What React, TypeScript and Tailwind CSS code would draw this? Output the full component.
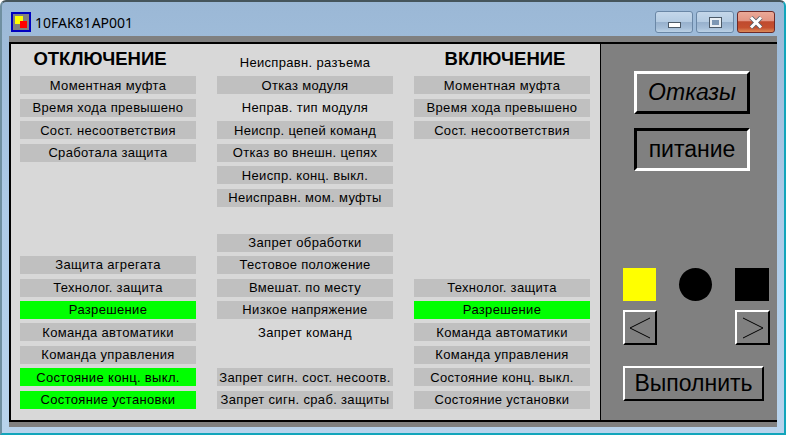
const off = ["Моментная муфта", "Время хода превышено", "Сост. несоответствия", "Сработала защита", "", "", "", "", "Защита агрегата", "Технолог. защита", "Разрешение", "Команда автоматики", "Команда управления", "Состояние конц. выкл.", "Состояние установки"];
const mid = ["Неисправн. разъема", "Отказ модуля", "Неправ. тип модуля", "Неиспр. цепей команд", "Отказ во внешн. цепях", "Неиспр. конц. выкл.", "Неисправн. мом. муфты", "", "Запрет обработки", "Тестовое положение", "Вмешат. по месту", "Низкое напряжение", "Запрет команд", "", "Запрет сигн. сост. несоотв.", "Запрет сигн. сраб. защиты"];
const on = ["Моментная муфта", "Время хода превышено", "Сост. несоответствия", "", "", "", "", "", "", "Технолог. защита", "Разрешение", "Команда автоматики", "Команда управления", "Состояние конц. выкл.", "Состояние установки"];

// rows in the middle column that sit on the panel colour, no grey plate
const plainMid = ["Неисправн. разъема", "Неправ. тип модуля", "Запрет команд"];
const greenOff = ["Разрешение", "Состояние конц. выкл.", "Состояние установки"];
const greenOn = ["Разрешение"];

function Cell({ text, green, plain }: { text: string; green?: boolean; plain?: boolean }) {
  if (!text) return <div className="h-[18px]" />;
  const bg = green ? "bg-[#00ff00]" : plain ? "" : "bg-[#c0c0c0]";
  return (
    <div className={`flex h-[18px] items-center justify-center whitespace-nowrap text-[13px] tracking-[0.33px] text-black ${bg}`}>
      {text}
    </div>
  );
}

function Column({ heading, headingClass, rows, green = [], plain = [] }: { heading?: string; headingClass?: string; rows: string[]; green?: string[]; plain?: string[] }) {
  return (
    <div className="flex w-[176px] flex-col gap-y-[4.467px]">
      {heading && (
        <div className={`flex h-[18px] items-start justify-center text-[18.5px] font-bold leading-[10px] text-black ${headingClass}`}>{heading}</div>
      )}
      {rows.map((t, i) => (
        <Cell key={i} text={t} green={green.includes(t)} plain={plain.includes(t)} />
      ))}
    </div>
  );
}

export default function App() {
  return (
    <div className="flex h-[435px] w-[786px] flex-col overflow-hidden rounded-t-[6px] border-2 border-b-[#12a5bb] border-l-[#6f8fa0] border-r-[#12a5bb] border-t-[#45555c] bg-gradient-to-b from-[#9bb8d6] via-[#aecbe8] to-[#b8d3ec] font-['Liberation_Sans',Arial,sans-serif]">
      {/* title bar */}
      <div className="flex h-[34px] shrink-0 items-start pl-[9px] pr-[9px]">
        <div className="mt-[10px] flex h-[20px] w-[20px] items-center justify-center border-2 border-[#0000c0] bg-[#808080]">
          <svg width="14" height="14" viewBox="0 0 14 14">
            <rect x="1" y="1" width="8" height="8" fill="#ffff00" />
            <rect x="6" y="6" width="7" height="7" fill="#ff0000" />
          </svg>
        </div>
        <span className="ml-[4px] mt-[12px] font-['Noto_Sans',sans-serif] text-[14px] leading-[18px] text-black">10FAK81AP001</span>
        <div className="ml-auto mt-[9px] flex gap-[3px]">
          <div className="flex h-[22px] w-[38px] items-end justify-center rounded-[3px] border border-[#6a87a6] bg-[linear-gradient(#c4d7ea_0%,#b4cbe2_50%,#97b1cd_52%,#a5bed8_80%,#bcd2e6_100%)] pb-[4px]">
            <div className="h-[6px] w-[13px] border border-[#4c5a68] bg-white" />
          </div>
          <div className="flex h-[22px] w-[38px] items-center justify-center rounded-[3px] border border-[#6a87a6] bg-[linear-gradient(#c4d7ea_0%,#b4cbe2_50%,#97b1cd_52%,#a5bed8_80%,#bcd2e6_100%)]">
            <div className="h-[9px] w-[11px] border-2 border-[#e8eef4] bg-[#7d97b4] outline outline-1 outline-[#4c5a68]" />
          </div>
          <div className="flex h-[22px] w-[38px] items-center justify-center rounded-[3px] border border-[#6e2a28] bg-[linear-gradient(#eba998_0%,#e29482_46%,#bf4a2e_48%,#c5502f_78%,#dc8a58_100%)]">
            <svg width="14" height="13" viewBox="0 0 14 13">
              <path d="M2 1.5 L12 11.5 M12 1.5 L2 11.5" stroke="#56606a" strokeWidth="4.5" />
              <path d="M2 1.5 L12 11.5 M12 1.5 L2 11.5" stroke="#ffffff" strokeWidth="3" />
            </svg>
          </div>
        </div>
      </div>

      {/* client area */}
      <div className="ml-[7px] flex h-[391px] w-[768px] flex-col bg-[#808080]">
        <div className="mt-[6px] flex h-[380px] border-y-2 border-black">
          <div className="flex w-[592px] gap-x-[21px] border-l-2 border-r border-black bg-[#d8d8d8] pl-[9px] pt-[10px]">
            <Column heading="ОТКЛЮЧЕНИЕ" headingClass="pr-[16px]" rows={off} green={greenOff} />
            <Column rows={mid} plain={plainMid} />
            <Column heading="ВКЛЮЧЕНИЕ" headingClass="pl-[6px]" rows={on} green={greenOn} />
          </div>
          <div className="flex flex-1 flex-col bg-[#808080] pl-[22px] pt-[27px]">
            <div className="ml-[11px] flex h-[43px] w-[116px] items-center justify-center border-[3px] border-b-black border-l-white border-r-black border-t-white text-[23px] italic text-black">
              Отказы
            </div>
            <div className="ml-[11px] mt-[14px] flex h-[43px] w-[116px] items-center justify-center border-[3px] border-b-white border-l-black border-r-white border-t-black text-[23px] text-black">
              питание
            </div>
            <div className="mt-[97px] flex w-[146px] items-center justify-between">
              <div className="h-[33px] w-[33px] bg-[#ffff00]" />
              <div className="h-[33px] w-[33px] rounded-full bg-black" />
              <div className="h-[33px] w-[34px] bg-black" />
            </div>
            <div className="mt-[9px] flex w-[147px] justify-between">
              <div className="flex h-[35px] w-[34px] items-center justify-center border-2 border-b-black border-l-white border-r-black border-t-white">
                <svg width="22" height="22" viewBox="0 0 22 22">
                  <path d="M21 1 L1 11 L21 21" fill="none" stroke="#000" strokeWidth="1" />
                </svg>
              </div>
              <div className="flex h-[35px] w-[35px] items-center justify-center border-2 border-b-black border-l-white border-r-black border-t-white">
                <svg width="22" height="22" viewBox="0 0 22 22">
                  <path d="M1 1 L21 11 L1 21" fill="none" stroke="#000" strokeWidth="1" />
                </svg>
              </div>
            </div>
            <div className="mt-[21px] flex h-[35px] w-[141px] items-center justify-center border-2 border-b-black border-l-white border-r-black border-t-white text-[23px] text-black">
              Выполнить
            </div>
          </div>
        </div>
      </div>
    </div>
  );
}
